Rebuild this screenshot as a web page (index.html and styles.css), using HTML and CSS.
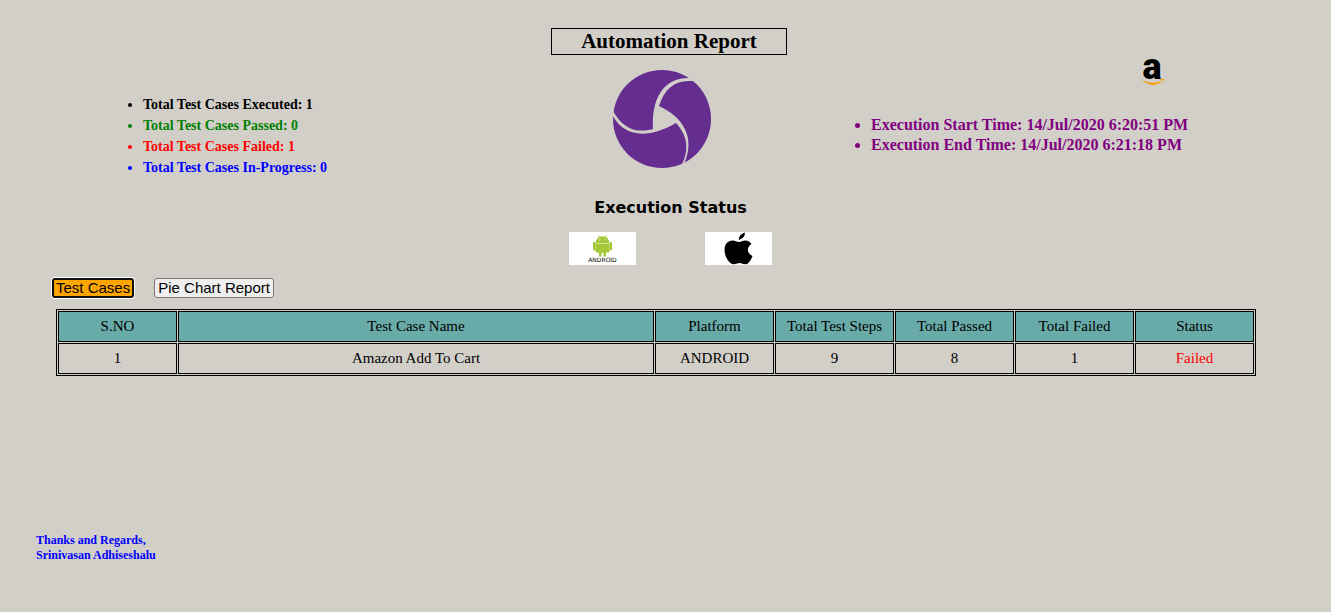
FILE: index.html
```html
<!DOCTYPE html>
<html lang="en">
<head>
<meta charset="utf-8">
<title>Automation Report</title>
<link rel="stylesheet" href="styles.css">
</head>
<body>
<header class="summary">
  <ul class="totals">
    <li>Total Test Cases Executed: 1</li>
    <li class="passed">Total Test Cases Passed: 0</li>
    <li class="failed">Total Test Cases Failed: 1</li>
    <li class="progress">Total Test Cases In-Progress: 0</li>
  </ul>
  <div class="brand">
    <h1 class="title">Automation Report</h1>
    <svg class="appium" viewBox="24 23 294 294" role="img" aria-label="Appium">
      <circle cx="171" cy="170" r="147" fill="#662d91"/>
      <path fill="#d2cfc8" d="M262 48C205 40 138 75 144 200C90 215 50 195 24 145L24 162C60 225 130 230 213 182C250 222 252 265 230 308L238 304C272 225 235 165 162 131C180 75 215 50 268 57Z"/>
    </svg>
  </div>
  <div class="timing">
    <svg class="amazon" viewBox="0 -14 26 46" role="img" aria-label="Amazon">
      <text class="amazon-letter" x="11" y="21" text-anchor="middle">a</text>
      <path fill="#f90" d="M0 21Q11 27.500 20 23L20.500 24Q11 31 0 21ZM18 21.500Q21.500 20 23.300 21.100Q23.500 23.500 21.300 25.700Q22.300 23 22 22.100Q20.500 21.500 18 21.500Z"/>
    </svg>
    <ul class="times">
      <li>Execution Start Time: 14/Jul/2020 6:20:51 PM</li>
      <li>Execution End Time: 14/Jul/2020 6:21:18 PM</li>
    </ul>
  </div>
</header>
<section class="status">
  <h2 class="status-title">Execution Status</h2>
  <div class="platforms">
    <svg class="platform" viewBox="0 0 67 33" role="img" aria-label="Android">
      <g fill="#a4c639">
        <path d="M26.500 11A7 6.800 0 0 1 40.500 11ZM26.500 11.500H40.500V19.500Q40.500 20.500 39.500 20.500H37V23.500A1.300 1.300 0 0 1 34.400 23.500V20.500H32.600V23.500A1.300 1.300 0 0 1 30 23.500V20.500H27.500Q26.500 20.500 26.500 19.500Z"/>
        <rect x="24" y="10" width="2.500" height="8.500" rx="1"/>
        <rect x="40.500" y="10" width="2.500" height="8.500" rx="1"/>
        <path d="M29.500 3L30.500 6M37.500 3L36.500 6" stroke="#a4c639" stroke-width=".7"/>
      </g>
      <circle cx="30.700" cy="7.800" r=".6" fill="#fff"/>
      <circle cx="36.300" cy="7.800" r=".6" fill="#fff"/>
      <text class="android-word" x="33.500" y="30" text-anchor="middle">ANDROID</text>
    </svg>
    <svg class="platform" viewBox="0 0 67 33" role="img" aria-label="Apple">
      <path d="M33.800 8Q33.500 2.500 39.800 .5Q40.500 5.500 33.800 8ZM34 10C36 10 37.500 8.500 40 8.500C43 8.500 45 10 46.500 12C41 15.500 42 21.500 47.500 24C46 28 43.500 32 41 32.300C38.500 32.500 37 31 34.500 31C32 31 30.500 32.500 28.500 32.300C24 32 19.500 24 19.500 18C19.500 12 23 8.600 27.500 8.600C30 8.600 32 10 34 10Z"/>
    </svg>
  </div>
</section>
<main class="report">
  <div class="tabs">
    <button class="tab active" type="button">Test Cases</button>
    <button class="tab" type="button">Pie Chart Report</button>
  </div>
  <table class="cases">
    <colgroup><col class="narrow"><col><col class="narrow"><col class="narrow"><col class="narrow"><col class="narrow"><col class="narrow"></colgroup>
    <thead>
      <tr><th>S.NO</th><th>Test Case Name</th><th>Platform</th><th>Total Test Steps</th><th>Total Passed</th><th>Total Failed</th><th>Status</th></tr>
    </thead>
    <tbody>
      <tr><td>1</td><td>Amazon Add To Cart</td><td>ANDROID</td><td>9</td><td>8</td><td>1</td><td class="failed">Failed</td></tr>
    </tbody>
  </table>
</main>
<footer class="signature">Thanks and Regards,<br>Srinivasan Adhiseshalu</footer>
</body>
</html>
```
FILE: styles.css
```css
* { box-sizing: border-box; }
body {
  margin: 0;
  background: #d2cfc8;
  color: #000;
  font-family: "Liberation Serif", "Times New Roman", serif;
}
.summary {
  display: grid;
  grid-template-columns: 1fr 236px 1fr;
  padding: 28px 0 0 7px;
}
.totals {
  margin: 66px 0 4px;
  padding-left: 136px;
  font-size: 14px;
  font-weight: bold;
  line-height: 21px;
}
.passed { color: green; }
.failed { color: red; }
.progress { color: blue; }
.brand {
  display: flex;
  flex-direction: column;
  align-items: center;
  gap: 15px;
}
.title {
  width: 100%;
  margin: 0;
  border: 1px solid #000;
  font-size: 21px;
  line-height: 25px;
  text-align: center;
}
.appium {
  width: 98px;
  height: 98px;
  margin-right: 14px;
}
.timing {
  display: flex;
  flex-direction: column;
  padding: 16px 0 0 84px;
}
.amazon {
  width: 26px;
  height: 46px;
  margin-left: 270px;
}
.amazon-letter {
  font: 900 36px Roboto, Arial, sans-serif;
}
.times {
  margin: 25px 0 0;
  padding: 0;
  color: purple;
  font-size: 16px;
  font-weight: bold;
  line-height: 20px;
}
.status {
  display: flex;
  flex-direction: column;
  align-items: center;
  gap: 13px;
  padding: 15px 0 0 10px;
}
.status-title {
  margin: 0;
  font: bold 16px/22px "DejaVu Sans", Verdana, sans-serif;
}
.platforms {
  display: flex;
  gap: 69px;
}
.platform {
  width: 67px;
  height: 33px;
  background: #fff;
}
.android-word {
  font: 6px "DejaVu Sans", Verdana, sans-serif;
}
.report { padding: 13px 75px 0 52px; }
.tabs {
  display: flex;
  gap: 20px;
}
.tab {
  height: 20px;
  padding: 0 3px;
  border: 1px solid #767676;
  border-radius: 3px;
  background: #efefef;
  color: #000;
  font: 15px/18px "Liberation Sans", Arial, sans-serif;
}
.tab.active {
  padding: 0 2px;
  border: 2px solid #101010;
  background: orange;
  line-height: 16px;
  box-shadow: 0 0 0 1px #fff;
}
.cases {
  width: calc(100% - 4px);
  margin: 11px 0 0 4px;
  border: 1px solid #000;
  border-spacing: 1px;
  table-layout: fixed;
  font-size: 15px;
  text-align: center;
}
.narrow { width: 119px; }
.cases th,
.cases td {
  height: 31px;
  padding: 0;
  border: 1px solid #000;
  font-weight: normal;
}
.cases th {
  background: #68aba9;
}
.signature {
  padding: 157px 0 0 36px;
  color: blue;
  font-size: 12px;
  font-weight: bold;
  line-height: 15px;
}
```
